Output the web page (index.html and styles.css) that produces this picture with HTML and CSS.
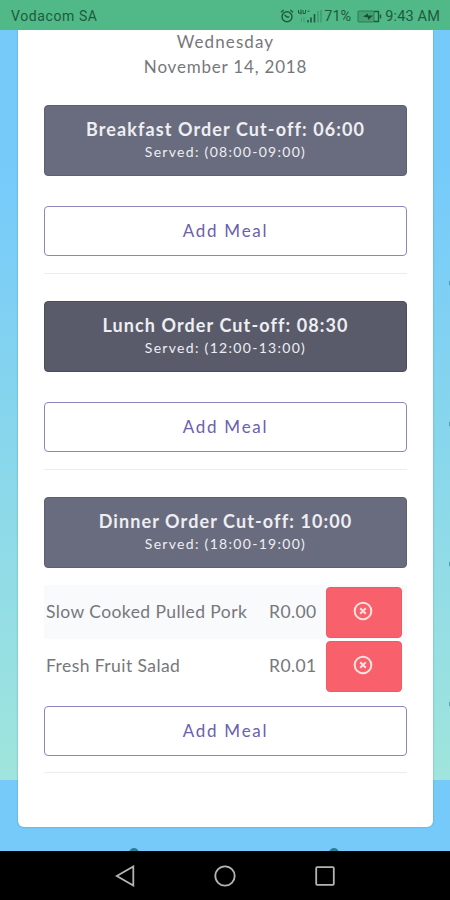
FILE: index.html
```
<!DOCTYPE html>
<html lang="en">
<head>
    <meta charset="UTF-8">
    <title>Meal Orders</title>
    <meta name="viewport" content="width=device-width, initial-scale=1.0">
    <link rel="stylesheet" href="styles.css">
</head>
<body>
    <div class="screen">
        <!-- Status bar -->
        <div class="status-bar">
            <span class="carrier">Vodacom SA</span>
            <svg class="alarm" width="14" height="14" viewBox="0 0 14 14">
                <circle cx="7" cy="7.7" r="5"/>
                <path d="M4.6 6l2.4 2h2.2M1 3.2L3.6 1M13 3.2L10.4 1"/>
            </svg>
            <svg class="signal" width="26" height="15" viewBox="0 0 26 15">
                <path class="net" d="M1.500 1v3h3M4 .5v5M6 1v3.500h2M8.500 1v3.500M10.500 2.200h2"/>
                <path class="net faint" d="M4.500 9v4M7 8v5"/>
                <path class="bars" d="M11 13.500v-2.500M14 13.500v-5M17.500 13.500V5"/>
                <path class="bars faint" d="M21 13.500V2M24 13.500V1"/>
            </svg>
            <span class="percent">71%</span>
            <svg class="battery" width="25" height="13" viewBox="0 0 25 13">
                <rect class="level" x="1" y="1" width="16" height="11" rx="1"/>
                <path class="case" d="M17 1.500h4.500v10H17M23.500 4.500v4"/>
                <path class="bolt" d="M6 6.500l5-3v2h5l-5 4.500V7.500z"/>
            </svg>
            <span class="clock">9:43 AM</span>
        </div>

        <!-- Page -->
        <div class="page">
            <div class="card">
                <div class="date">
                    <div class="weekday">Wednesday</div>
                    <div class="day">November 14, 2018</div>
                </div>

                <div class="meal">
                    <div class="meal-header">
                        <div class="meal-title">Breakfast Order Cut-off: 06:00</div>
                        <div class="meal-served">Served: (08:00-09:00)</div>
                    </div>
                    <button class="add-meal">Add Meal</button>
                </div>

                <div class="meal">
                    <div class="meal-header active">
                        <div class="meal-title">Lunch Order Cut-off: 08:30</div>
                        <div class="meal-served">Served: (12:00-13:00)</div>
                    </div>
                    <button class="add-meal">Add Meal</button>
                </div>

                <div class="meal last">
                    <div class="meal-header">
                        <div class="meal-title">Dinner Order Cut-off: 10:00</div>
                        <div class="meal-served">Served: (18:00-19:00)</div>
                    </div>
                    <div class="order-list">
                        <div class="order striped">
                            <span class="order-name">Slow Cooked Pulled Pork</span>
                            <span class="order-price">R0.00</span>
                            <button class="remove">
                                <svg width="20" height="20" viewBox="0 0 20 20"><circle cx="10" cy="10" r="8.300"/><path d="M7.200 7.200l5.600 5.600M12.800 7.200l-5.600 5.600"/></svg>
                            </button>
                        </div>
                        <div class="order">
                            <span class="order-name">Fresh Fruit Salad</span>
                            <span class="order-price">R0.01</span>
                            <button class="remove">
                                <svg width="20" height="20" viewBox="0 0 20 20"><circle cx="10" cy="10" r="8.300"/><path d="M7.200 7.200l5.600 5.600M12.800 7.200l-5.600 5.600"/></svg>
                            </button>
                        </div>
                    </div>
                    <button class="add-meal">Add Meal</button>
                </div>
            </div>

            <!-- Background dots cut off by the screen edges -->
            <i class="dot side d1"></i>
            <i class="dot side d2"></i>
            <i class="dot side d3"></i>
            <i class="dot side d4"></i>
            <i class="dot bottom b1"></i>
            <i class="dot bottom b2"></i>
        </div>

        <!-- Navigation bar -->
        <div class="nav-bar">
            <svg width="20" height="22" viewBox="0 0 20 22"><path d="M18.300 1.500v19L1.800 11z"/></svg>
            <svg width="22" height="22" viewBox="0 0 22 22"><circle cx="11" cy="11" r="9.700"/></svg>
            <svg width="20" height="20" viewBox="0 0 20 20"><rect x="1.200" y="1.200" width="17.600" height="17.600" rx="1"/></svg>
        </div>
    </div>
</body>
</html>
```

FILE: styles.css
```
body { margin: 0; font-family: Lato, "Liberation Sans", sans-serif; }
.screen {
    display: flex;
    flex-direction: column;
    height: 900px;
    overflow: hidden;
}

.status-bar {
    display: flex;
    align-items: center;
    height: 30px;
    padding: 2px 10px 0 11px;
    box-sizing: border-box;
    background: #50b987;
    color: #1d5a3f;
    font-family: Roboto, sans-serif;
    font-size: 14.5px;
    white-space: nowrap;
}
.carrier { margin-right: auto; font-size: 14px; letter-spacing: 0.6px; }
.status-bar svg { fill: none; stroke: #1d5a3f; stroke-width: 1.4; }
.alarm { margin-right: 3px; }
.signal { margin-right: 1px; }
.signal .net { stroke-width: 1; }
.signal .bars { stroke-width: 1.6; }
.signal .faint { opacity: 0.3; }
.percent { width: 29px; }
.battery { margin: 0 3px 0 4px; }
.battery .level { fill: #38896180; stroke: #2f7b55; stroke-width: 1; }
.battery .bolt { fill: #174f36; stroke: none; }
.clock { letter-spacing: 0.15px; }

.page {
    flex: 1;
    position: relative;
    overflow: hidden;
    padding: 0 17px 0 18px;
    background: linear-gradient(#75cafa 0, #75cafa 130px, #9fe5dc 750px, #75cafa 750px);
}
.card {
    height: 797px;
    padding: 0 26px;
    box-sizing: border-box;
    background: #fff;
    border-radius: 0 0 6px 6px;
    box-shadow: 0 0 2px rgba(40, 90, 120, 0.45);
}
.date {
    height: 76px;
    margin-top: -1px;
    color: #77777b;
    font-size: 17px;
    line-height: 25px;
    text-align: center;
}
.card::before { content: ""; display: table; }
.weekday { letter-spacing: 1.1px; }
.day { letter-spacing: 0.8px; }

.meal {
    height: 168px;
    margin-bottom: 27px;
    border-bottom: 1.5px solid #ececf0;
}
.meal.last { height: 275px; }
.meal-header {
    height: 71px;
    padding-top: 11px;
    box-sizing: border-box;
    background: #696c7e;
    border: 1px solid #5e6072;
    border-radius: 4px;
    color: #eeeef3;
    text-align: center;
    margin-bottom: 30px;
}
.meal-header.active { background: #595b6a; border-color: #4b4d5b; }
.meal-title { font-size: 18px; line-height: 25px; font-weight: bold; letter-spacing: 1.1px; }
.meal-served { font-size: 14px; line-height: 20px; letter-spacing: 1.3px; }

.add-meal {
    display: block;
    width: 363px;
    height: 50px;
    padding: 0 0 2px;
    background: #fff;
    border: 1.5px solid #8d86bd;
    border-radius: 4px;
    color: #6b60ad;
    font-family: inherit;
    font-size: 17px;
    letter-spacing: 1.75px;
}

.last .meal-header { margin-bottom: 17px; }
.order-list { margin-bottom: 13px; }
.order {
    display: flex;
    align-items: center;
    height: 54px;
    padding: 0 5px 0 2px;
    box-sizing: border-box;
    color: #77777b;
    font-size: 17.5px;
    letter-spacing: 0.42px;
}
.order-name, .order-price { padding-bottom: 2px; }
.order.striped { background: #f9fafc; }
.order-name { flex: 1; }
.order-price { width: 57px; }
.remove {
    display: flex;
    align-items: center;
    justify-content: center;
    width: 76px;
    height: 51px;
    padding: 0 2px 3px 0;
    background: #f8606b;
    border: 1px solid #f25964;
    border-radius: 4px;
}
.remove svg { fill: none; stroke: #ffe3e0; stroke-width: 2; }

.dot { position: absolute; border-radius: 50%; background: #2e7f95; }
.dot.side { right: -3px; width: 4px; height: 6px; opacity: 0.7; }
.d1 { top: 250px; }
.d2 { top: 391px; }
.d3 { top: 531px; }
.d4 { top: 671px; }
.dot.bottom { bottom: -7px; width: 10px; height: 10px; }
.b1 { left: 129px; }
.b2 { left: 329px; }

.nav-bar {
    display: flex;
    align-items: center;
    justify-content: center;
    gap: 79px;
    height: 49px;
    background: #000;
}
.nav-bar svg { fill: none; stroke: #b4b4b4; stroke-width: 1.8; }
```
